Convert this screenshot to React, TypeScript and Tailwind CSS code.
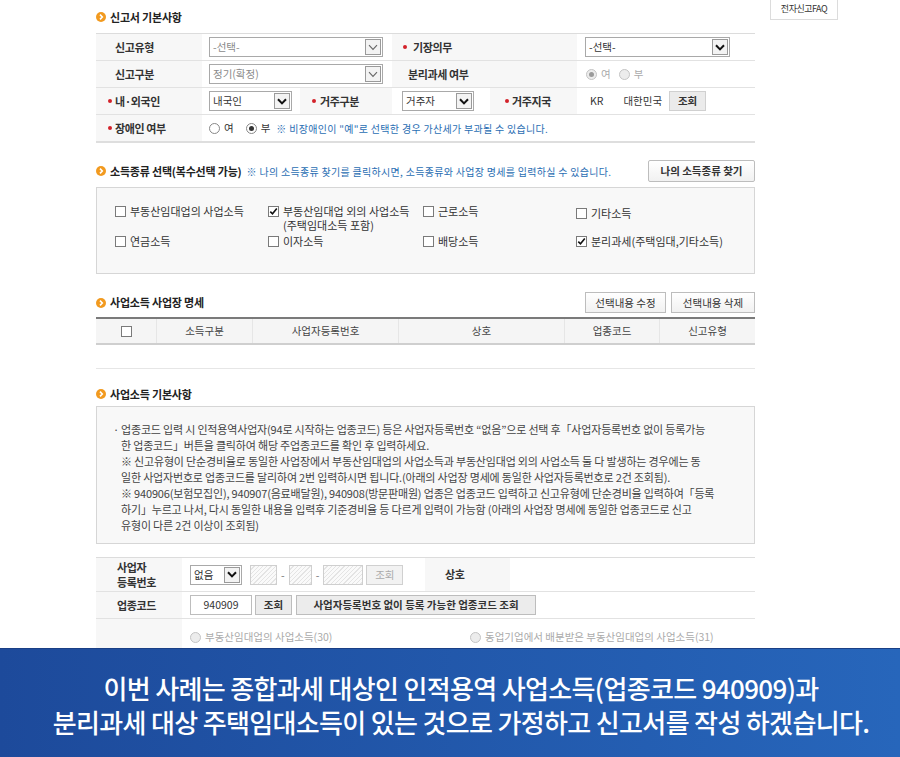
import React from "react";

function Bullet() {
  return (
    <svg width="10" height="10" viewBox="0 0 10 10" className="shrink-0">
      <circle cx="5" cy="5" r="5" fill="#f29a1f" />
      <path d="M4 2.6 L6.3 5 L4 7.4" stroke="#fff" strokeWidth="1.6" fill="none" />
    </svg>
  );
}

function Title({ children }: { children: React.ReactNode }) {
  return (
    <div className="flex h-[16px] items-center gap-[4px] text-[11px] font-bold tracking-[-0.2px] text-[#222]">
      <Bullet />
      {children}
    </div>
  );
}

function Dot() {
  return <span className="inline-block h-[4px] w-[4px] shrink-0 rounded-full bg-[#d3222a]" />;
}

function Select({ value, className, muted, heavy }: { value: string; className: string; muted?: boolean; heavy?: boolean }) {
  return (
    <div className={"flex h-[20px] items-center border border-[#a9a9a9] bg-white " + className}>
      <span className={"flex-1 truncate pl-[3px] text-[10.5px] " + (muted ? "text-[#8a8a8a]" : "text-[#333]")}>{value}</span>
      <span className="mr-[1px] flex h-[16px] w-[16px] items-center justify-center border border-[#9a9a9a] bg-[#f3f3f3]">
        <svg width="10" height="7" viewBox="0 0 10 7">
          <path d="M1 1.2 L5 5.4 L9 1.2" stroke={heavy ? "#111" : "#666"} strokeWidth={heavy ? 2 : 1.1} fill="none" />
        </svg>
      </span>
    </div>
  );
}

function Radio({ checked, disabled }: { checked?: boolean; disabled?: boolean }) {
  return (
    <span
      className={
        "flex h-[11px] w-[11px] shrink-0 items-center justify-center rounded-full border " +
        (disabled ? "border-[#c4c4c4] bg-[#ececec]" : "border-[#888] bg-white")
      }
    >
      {checked && <span className={"h-[5px] w-[5px] rounded-full " + (disabled ? "bg-[#9a9a9a]" : "bg-[#333]")} />}
    </span>
  );
}

function Check({ checked }: { checked?: boolean }) {
  return (
    <span className="flex h-[11px] w-[11px] shrink-0 items-center justify-center border border-[#7a7a7a] bg-white">
      {checked && (
        <svg width="9" height="9" viewBox="0 0 9 9">
          <path d="M1.3 4.6 L3.5 6.8 L7.8 1.6" stroke="#111" strokeWidth="1.6" fill="none" />
        </svg>
      )}
    </span>
  );
}

function Btn({ children, className = "" }: { children: React.ReactNode; className?: string }) {
  return (
    <div
      className={
        "flex items-center justify-center border border-[#bdbdbd] bg-linear-to-b from-white to-[#f1f1f1] text-[10.5px] font-bold text-[#333] " +
        className
      }
    >
      {children}
    </div>
  );
}

const LBL = "flex items-center bg-[#f7f7f7] text-[11px] font-bold tracking-[-0.4px] text-[#333]";
const VAL = "flex items-center bg-white";

function Hatch({ w }: { w: string }) {
  return (
    <span
      className={
        "h-[20px] border border-[#cfcfcf] bg-[repeating-linear-gradient(135deg,#fafafa_0px,#fafafa_2px,#e4e4e4_2px,#e4e4e4_3px)] " + w
      }
    />
  );
}

function CheckItem({ checked, children, className = "" }: { checked?: boolean; children: React.ReactNode; className?: string }) {
  return (
    <div className={"flex items-start gap-[4px] text-[11px] leading-[14px] text-[#333] " + className}>
      <span className="mt-[1.5px]">
        <Check checked={checked} />
      </span>
      <span>{children}</span>
    </div>
  );
}

const info = [
  "업종코드 입력 시 인적용역사업자(94로 시작하는 업종코드) 등은 사업자등록번호 \u201c없음\u201d으로 선택 후「사업자등록번호 없이 등록가능",
  "한 업종코드」버튼을 클릭하여 해당 주업종코드를 확인 후 입력하세요.",
  "※ 신고유형이 단순경비율로 동일한 사업장에서 부동산임대업의 사업소득과 부동산임대업 외의 사업소득 둘 다 발생하는 경우에는 동",
  "일한 사업자번호로 업종코드를 달리하여 2번 입력하시면 됩니다.(아래의 사업장 명세에 동일한 사업자등록번호로 2건 조회됨).",
  "※ 940906(보험모집인), 940907(음료배달원), 940908(방문판매원) 업종은 업종코드 입력하고 신고유형에 단순경비율 입력하여「등록",
  "하기」누르고 나서, 다시 동일한 내용을 입력후 기준경비율 등 다르게 입력이 가능함 (아래의 사업장 명세에 동일한 업종코드로 신고",
  "유형이 다른 2건 이상이 조회됨)",
];

export default function App() {
  return (
    <div className="h-[757px] w-[900px] overflow-hidden bg-white font-['Noto_Sans_CJK_KR',sans-serif] text-[#333]">
      <div className="flex h-[648px] items-start overflow-hidden">
        <div className="ml-[96px] w-[659px] pt-[9px]">
          {/* 신고서 기본사항 */}
          <Title>신고서 기본사항</Title>
          <div className="mt-[8px] border-t border-[#dcdcdc]">
            <div className="flex h-[27px] border-b border-[#e2e2e2]">
              <div className={LBL + " w-[106px] pl-[19px]"}>신고유형</div>
              <div className={VAL + " w-[190px] pl-[7px]"}>
                <Select value="-선택-" muted className="w-[174px]" />
              </div>
              <div className={LBL + " w-[185px] gap-[6px] pl-[11px]"}>
                <Dot />
                기장의무
              </div>
              <div className={VAL + " w-[178px] pl-[8px]"}>
                <Select value="-선택-" heavy className="w-[145px]" />
              </div>
            </div>
            <div className="flex h-[27px] border-b border-[#e2e2e2]">
              <div className={LBL + " w-[106px] pl-[19px]"}>신고구분</div>
              <div className={VAL + " w-[190px] pl-[7px]"}>
                <Select value="정기(확정)" muted className="w-[174px]" />
              </div>
              <div className={LBL + " w-[185px] pl-[16px]"}>분리과세 여부</div>
              <div className={VAL + " w-[178px] gap-[4px] pl-[9px] text-[10.5px] text-[#aaa]"}>
                <Radio checked disabled />
                <span>여</span>
                <span className="ml-[4px]">
                  <Radio disabled />
                </span>
                <span>부</span>
              </div>
            </div>
            <div className="flex h-[27px] border-b border-[#e2e2e2]">
              <div className={LBL + " w-[106px] gap-[3px] pl-[12px]"}>
                <Dot />
                내·외국인
              </div>
              <div className={VAL + " w-[98px] pl-[7px]"}>
                <Select value="내국인" heavy className="w-[83px]" />
              </div>
              <div className={LBL + " w-[92px] gap-[4px] pl-[12px]"}>
                <Dot />
                거주구분
              </div>
              <div className={VAL + " w-[98px] pl-[10px]"}>
                <Select value="거주자" heavy className="w-[72px]" />
              </div>
              <div className={LBL + " w-[87px] gap-[3px] pl-[15px]"}>
                <Dot />
                거주지국
              </div>
              <div className={VAL + " w-[178px] pl-[13px] text-[10.5px] text-[#333]"}>
                <span>KR</span>
                <span className="ml-[20px]">대한민국</span>
                <span className="ml-[7px] flex h-[20px] w-[37px] items-center justify-center border border-[#d0d0d0] bg-[#ebebeb] font-bold">
                  조회
                </span>
              </div>
            </div>
            <div className="flex h-[28px] border-b-2 border-[#dedede]">
              <div className={LBL + " w-[106px] gap-[3px] pl-[12px]"}>
                <Dot />
                장애인 여부
              </div>
              <div className={VAL + " flex-1 gap-[4px] pl-[7px] text-[10.5px]"}>
                <Radio />
                <span>여</span>
                <span className="ml-[8px]">
                  <Radio checked />
                </span>
                <span>부</span>
                <span className="ml-[2px] text-[10px] tracking-[0.3px] text-[#2a6eb3]">
                  ※ 비장애인이 "예"로 선택한 경우 가산세가 부과될 수 있습니다.
                </span>
              </div>
            </div>
          </div>

          {/* 소득종류 선택 */}
          <div className="mt-[17px] flex h-[22px] items-center justify-between">
            <div className="flex items-center gap-[5px]">
              <Title>소득종류 선택(복수선택 가능)</Title>
              <span className="text-[10px] tracking-[0.3px] text-[#2a6eb3]">
                ※ 나의 소득종류 찾기를 클릭하시면, 소득종류와 사업장 명세를 입력하실 수 있습니다.
              </span>
            </div>
            <Btn className="h-[22px] w-[107px] rounded-[2px]">나의 소득종류 찾기</Btn>
          </div>
          <div className="mt-[5px] h-[87px] border border-[#d6d6d6] bg-[#f8f8f8] pl-[18px] pt-[16px]">
            <div className="grid grid-cols-[153px_155px_153px_1fr] gap-y-[2px]">
              <CheckItem>부동산임대업의 사업소득</CheckItem>
              <CheckItem checked>
                부동산임대업 외의 사업소득
                <br />
                (주택임대소득 포함)
              </CheckItem>
              <CheckItem>근로소득</CheckItem>
              <CheckItem className="mt-[2px]">기타소득</CheckItem>
              <CheckItem>연금소득</CheckItem>
              <CheckItem>이자소득</CheckItem>
              <CheckItem>배당소득</CheckItem>
              <CheckItem checked>분리과세(주택임대,기타소득)</CheckItem>
            </div>
          </div>

          {/* 사업소득 사업장 명세 */}
          <div className="mt-[18px] flex h-[21px] items-center justify-between">
            <Title>사업소득 사업장 명세</Title>
            <div className="flex gap-[5px]">
              <Btn className="h-[21px] w-[81px] font-normal">선택내용 수정</Btn>
              <Btn className="h-[21px] w-[84px] font-normal">선택내용 삭제</Btn>
            </div>
          </div>
          <div className="mt-[4px] flex h-[28px] border-t-2 border-b-2 border-t-[#7a7a7a] border-b-[#cfcfcf] bg-[#f5f5f5] text-[10.5px] text-[#444]">
            <div className="flex w-[61px] items-center justify-center border-r border-[#e6e6e6]">
              <Check />
            </div>
            <div className="flex w-[96px] items-center justify-center border-r border-[#e6e6e6]">소득구분</div>
            <div className="flex w-[146px] items-center justify-center border-r border-[#e6e6e6]">사업자등록번호</div>
            <div className="flex w-[166px] items-center justify-center border-r border-[#e6e6e6]">상호</div>
            <div className="flex w-[95px] items-center justify-center border-r border-[#e6e6e6]">업종코드</div>
            <div className="flex flex-1 items-center justify-center">신고유형</div>
          </div>
          <div className="h-[24px] border-b border-[#e6e6e6]" />

          {/* 사업소득 기본사항 */}
          <div className="mt-[17px]">
            <Title>사업소득 기본사항</Title>
          </div>
          <div className="mt-[4px] h-[138px] border border-[#d6d6d6] bg-[#f8f8f8] pl-[16px] pt-[14px] text-[11px] leading-[16px] tracking-[-0.18px] text-[#444]">
            {info.map((line, i) => (
              <div key={i} className="flex whitespace-nowrap">
                <span className="w-[8px] shrink-0">{i === 0 ? "·" : ""}</span>
                <span>{line}</span>
              </div>
            ))}
          </div>

          {/* 입력 폼 */}
          <div className="mt-[13px] border-t border-[#dcdcdc]">
            <div className="flex h-[34px] border-b border-[#e2e2e2]">
              <div className={LBL + " w-[86px] pl-[21px] leading-[15px]"}>
                사업자
                <br />
                등록번호
              </div>
              <div className={VAL + " w-[243px] pl-[8px] text-[10.5px] text-[#777]"}>
                <Select value="없음" heavy className="w-[52px]" />
                <span className="ml-[8px]">
                  <Hatch w="block w-[27px]" />
                </span>
                <span className="mx-[4px]">-</span>
                <Hatch w="block w-[23px]" />
                <span className="mx-[4px]">-</span>
                <Hatch w="block w-[40px]" />
                <span className="ml-[3px] flex h-[20px] w-[37px] items-center justify-center border border-[#d0d0d0] bg-[#f2f2f2] text-[#aaa]">
                  조회
                </span>
              </div>
              <div className={LBL + " w-[85px] pl-[20px]"}>상호</div>
              <div className={VAL + " flex-1"} />
            </div>
            <div className="flex h-[27px] border-b border-[#e2e2e2]">
              <div className={LBL + " w-[86px] pl-[21px]"}>업종코드</div>
              <div className={VAL + " flex-1 pl-[8px] text-[10.5px]"}>
                <span className="flex h-[20px] w-[62px] items-center justify-center border border-[#bdbdbd] bg-white text-[#333]">
                  940909
                </span>
                <Btn className="ml-[3px] h-[20px] w-[37px] bg-none bg-[#ececec]">조회</Btn>
                <Btn className="ml-[4px] h-[20px] w-[240px] bg-none bg-[#ececec]">사업자등록번호 없이 등록 가능한 업종코드 조회</Btn>
              </div>
            </div>
            <div className="flex h-[30px]">
              <div className={LBL + " w-[86px]"} />
              <div className={VAL + " flex-1 pl-[8px] pt-[6px] text-[10.5px] text-[#aaa]"}>
                <div className="flex w-[280px] items-center gap-[4px]">
                  <Radio disabled />
                  부동산임대업의 사업소득(30)
                </div>
                <div className="flex items-center gap-[4px]">
                  <Radio disabled />
                  동업기업에서 배분받은 부동산임대업의 사업소득(31)
                </div>
              </div>
            </div>
          </div>
        </div>
        <div className="ml-[15px] mt-[-2px] flex h-[22px] w-[68px] items-center justify-center border border-[#dcdcdc] bg-white text-[9px] tracking-[-0.5px] text-[#333]">
          전자신고FAQ
        </div>
      </div>

      {/* 하단 자막 */}
      <div className="flex h-[109px] flex-col items-center border-t border-[#1a3f85] bg-linear-to-r from-[#1d4a9b] to-[#2766bb] pl-[22px] pt-[22px] text-[26px] font-medium leading-[34px] tracking-[-0.65px] text-white">
        <div>이번 사례는 종합과세 대상인 인적용역 사업소득(업종코드 940909)과</div>
        <div>분리과세 대상 주택임대소득이 있는 것으로 가정하고 신고서를 작성 하겠습니다.</div>
      </div>
    </div>
  );
}
